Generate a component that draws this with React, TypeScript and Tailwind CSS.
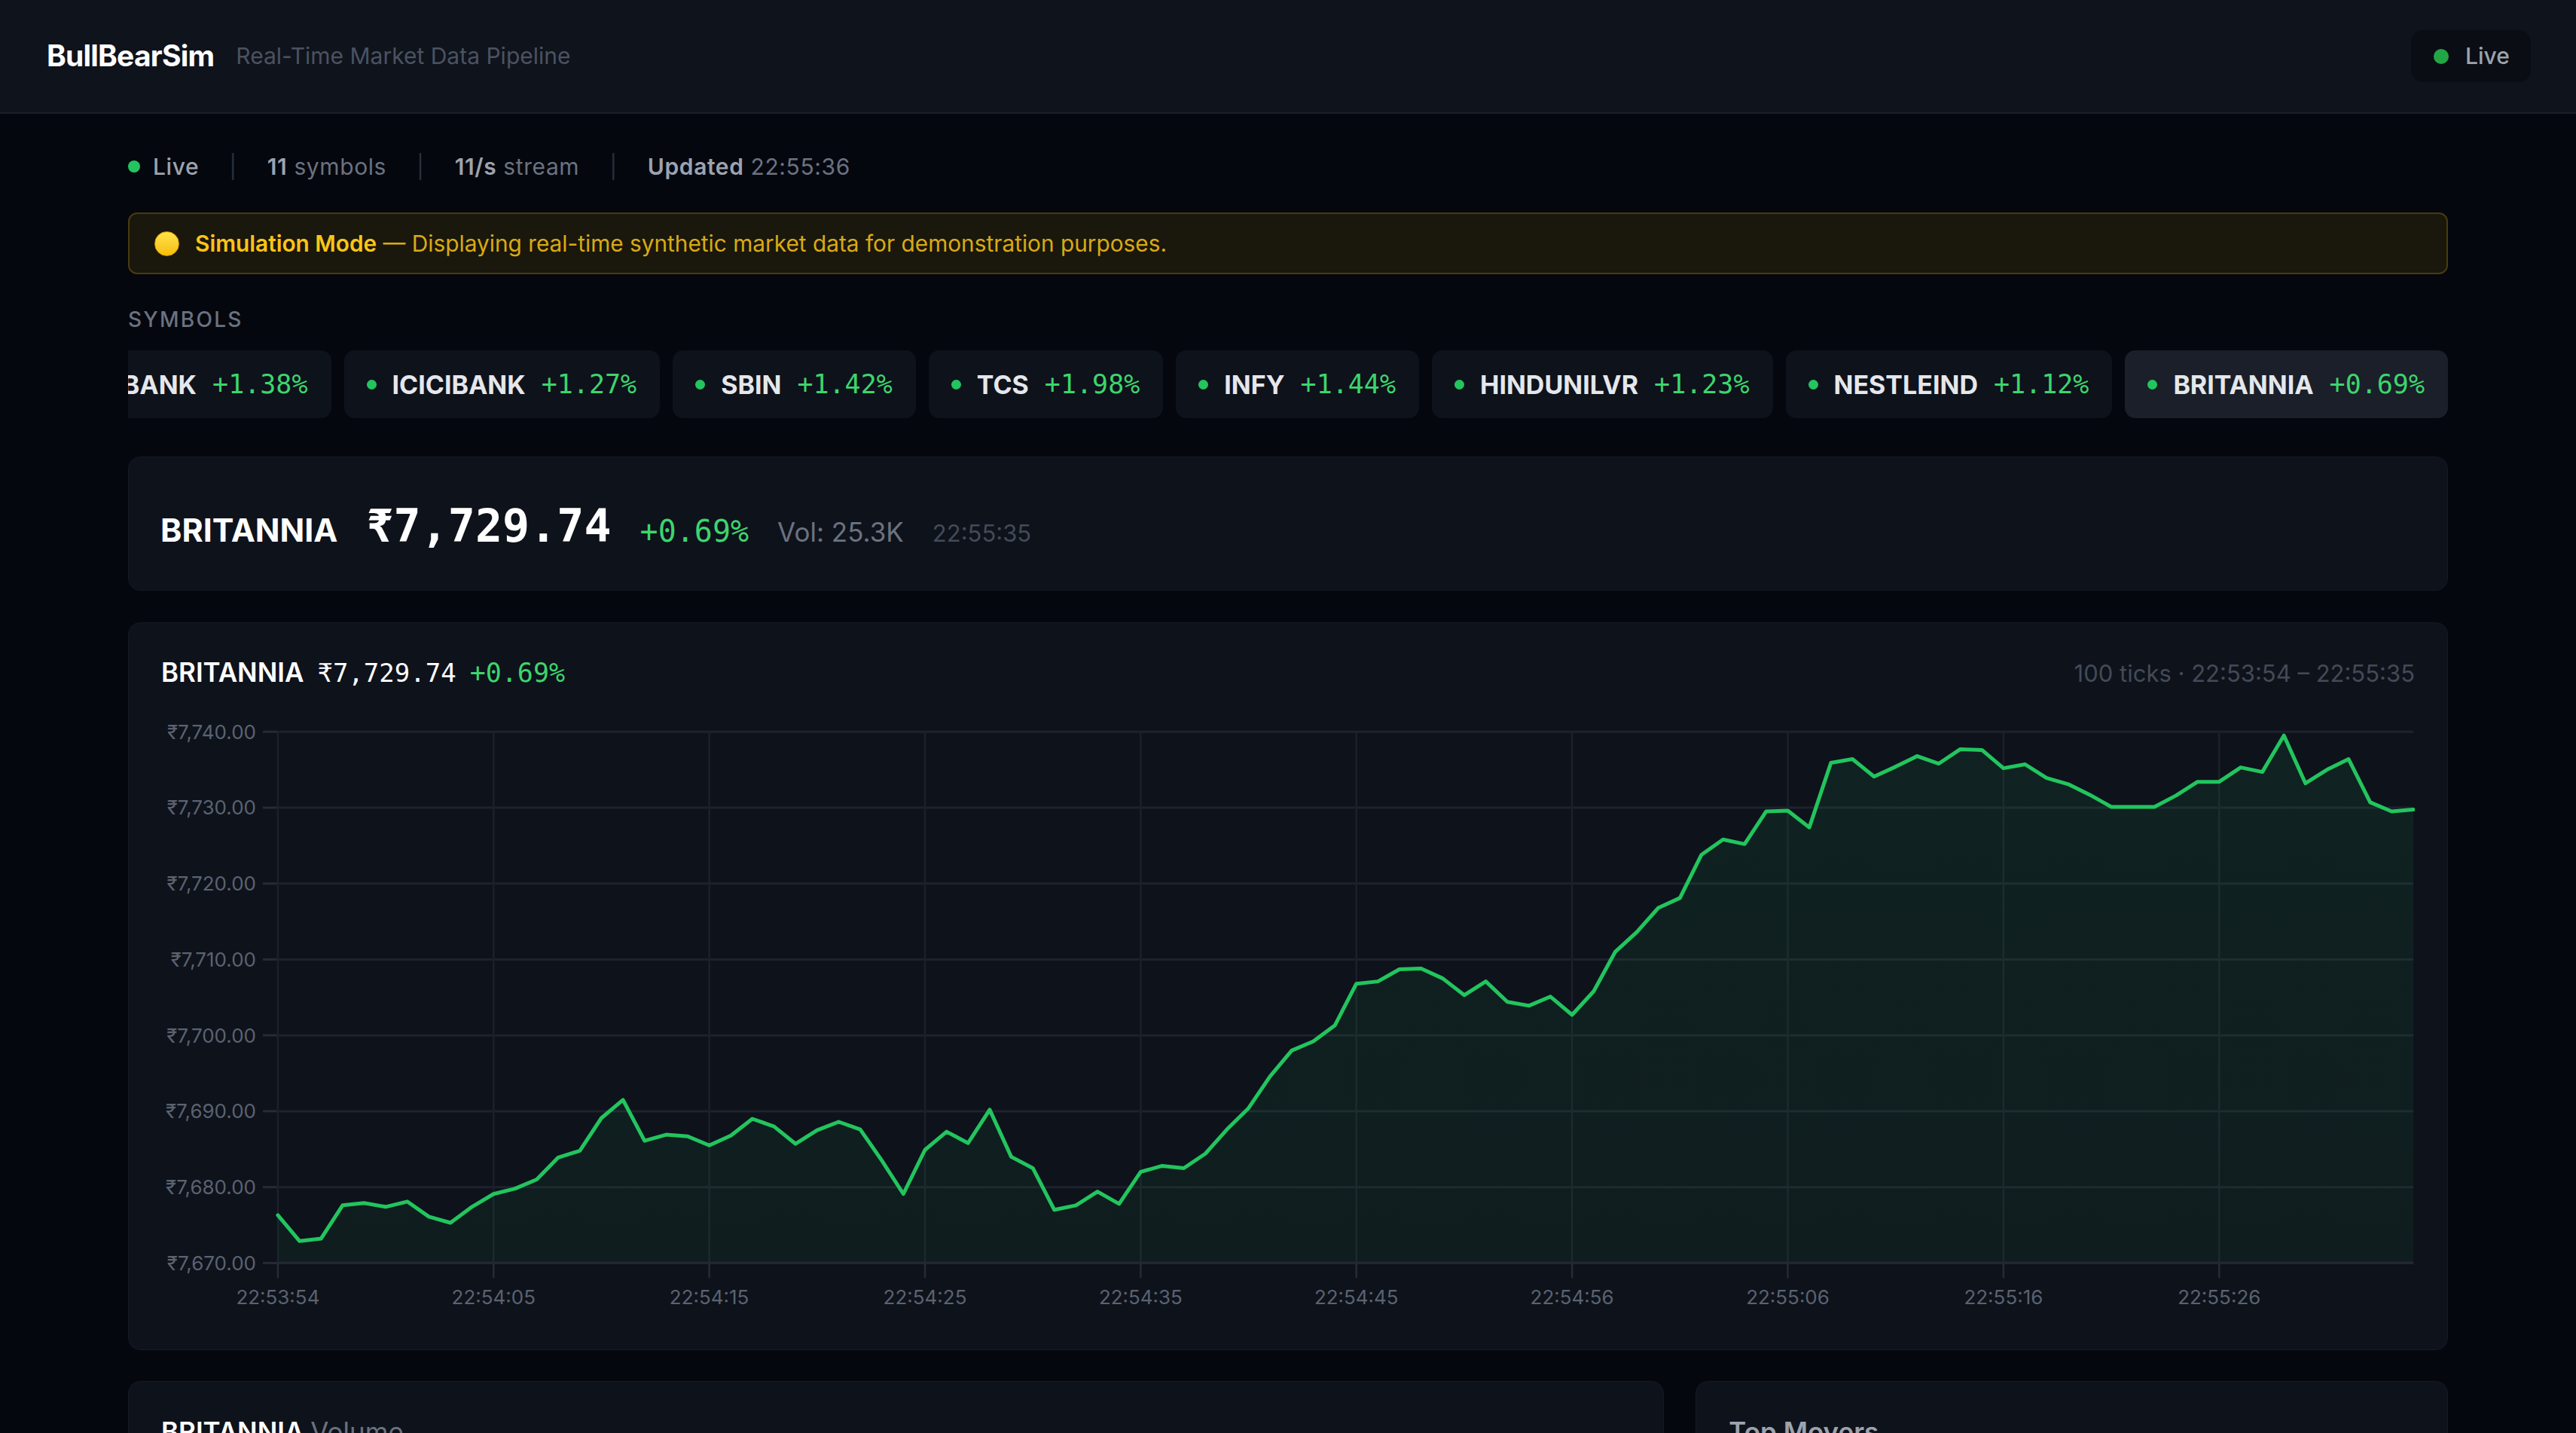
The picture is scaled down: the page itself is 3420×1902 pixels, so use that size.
import React from 'react';

interface Chip {
  sym: string;
  pct: string;
  active?: boolean;
}

const chips: Chip[] = [
  { sym: 'RELIANCE', pct: '+0.92%' },
  { sym: 'BHARTIARTL', pct: '+1.05%' },
  { sym: 'ITC', pct: '+0.47%' },
  { sym: 'HDFCBANK', pct: '+1.38%' },
  { sym: 'ICICIBANK', pct: '+1.27%' },
  { sym: 'SBIN', pct: '+1.42%' },
  { sym: 'TCS', pct: '+1.98%' },
  { sym: 'INFY', pct: '+1.44%' },
  { sym: 'HINDUNILVR', pct: '+1.23%' },
  { sym: 'NESTLEIND', pct: '+1.12%' },
  { sym: 'BRITANNIA', pct: '+0.69%', active: true },
];

// last 100 ticks of BRITANNIA
const prices = [
  7676.3, 7672.9, 7673.2, 7677.6, 7677.9, 7677.4, 7678.1, 7676.1, 7675.3, 7677.4,
  7679.1, 7679.8, 7681.0, 7683.9, 7684.8, 7689.1, 7691.5, 7686.1, 7686.9, 7686.7,
  7685.5, 7686.8, 7689.0, 7688.0, 7685.7, 7687.5, 7688.6, 7687.6, 7683.5, 7679.1,
  7684.9, 7687.3, 7685.8, 7690.2, 7684.0, 7682.5, 7677.0, 7677.6, 7679.4, 7677.8,
  7682.0, 7682.8, 7682.5, 7684.4, 7687.6, 7690.4, 7694.6, 7698.0, 7699.2, 7701.3,
  7706.8, 7707.1, 7708.7, 7708.8, 7707.5, 7705.3, 7707.1, 7704.4, 7703.9, 7705.1,
  7702.7, 7705.8, 7711.0, 7713.6, 7716.8, 7718.1, 7723.8, 7725.8, 7725.2, 7729.5,
  7729.6, 7727.4, 7735.9, 7736.4, 7734.1, 7735.4, 7736.8, 7735.8, 7737.7, 7737.6,
  7735.2, 7735.7, 7733.9, 7733.1, 7731.7, 7730.1, 7730.1, 7730.1, 7731.6, 7733.4,
  7733.4, 7735.3, 7734.7, 7739.5, 7733.2, 7735.0, 7736.4, 7730.7, 7729.5, 7729.74,
];

const timeLabels = [
  '22:53:54', '22:54:05', '22:54:15', '22:54:25', '22:54:35',
  '22:54:45', '22:54:56', '22:55:06', '22:55:16', '22:55:26',
];

const yTicks = [7740, 7730, 7720, 7710, 7700, 7690, 7680, 7670];

const PLOT_L = 155;
const PLOT_R = 2992;
const PLOT_T = 42;
const ROW = 100.8;
const STEP = (PLOT_R - PLOT_L) / 99;

const px = (i: number) => PLOT_L + i * STEP;
const py = (p: number) => PLOT_T + (7740 - p) * (ROW / 10);

const fmt = (v: number) => '₹' + v.toLocaleString('en-US', { minimumFractionDigits: 2, maximumFractionDigits: 2 });

const PriceChart = () => {
  const bottom = PLOT_T + ROW * 7;
  const line = prices.map((p, i) => `${i === 0 ? 'M' : 'L'}${px(i).toFixed(1)},${py(p).toFixed(1)}`).join(' ');
  const area = `${line} L${PLOT_R},${bottom} L${PLOT_L},${bottom} Z`;

  return (
    <svg width="100%" height="816" viewBox="0 0 2994 816" className="block">
      <defs>
        <linearGradient id="fillGreen" x1="0" y1="0" x2="0" y2="1">
          <stop offset="0%" stopColor="#22c55e" stopOpacity="0.09" />
          <stop offset="100%" stopColor="#22c55e" stopOpacity="0.06" />
        </linearGradient>
      </defs>

      {/* grid */}
      {yTicks.map((v, k) => (
        <g key={v}>
          <line x1={PLOT_L} x2={PLOT_R} y1={PLOT_T + k * ROW} y2={PLOT_T + k * ROW} stroke="#1d222d" strokeWidth="3" />
          <line x1={PLOT_L - 20} x2={PLOT_L} y1={PLOT_T + k * ROW} y2={PLOT_T + k * ROW} stroke="#262b36" strokeWidth="3" />
          <text x={PLOT_L - 29} y={PLOT_T + k * ROW + 9.5} textAnchor="end" fontSize="26" fill="#5b6270" fontFamily="Inter, 'Noto Sans', sans-serif">
            {fmt(v)}
          </text>
        </g>
      ))}
      {timeLabels.map((t, k) => {
        const x = px(k * 10);
        return (
          <g key={t}>
            <line x1={x} x2={x} y1={PLOT_T} y2={bottom} stroke="#1b202a" strokeWidth="2.5" />
            <line x1={x} x2={x} y1={bottom} y2={bottom + 20} stroke="#262b36" strokeWidth="2.5" />
            <text x={x} y={802} textAnchor="middle" fontSize="26" fill="#5b6270" fontFamily="Inter, 'Noto Sans', sans-serif">
              {t}
            </text>
          </g>
        );
      })}

      <path d={area} fill="url(#fillGreen)" />
      <path d={line} fill="none" stroke="#22c55e" strokeWidth="5" strokeLinejoin="round" strokeLinecap="round" />
      <line x1={PLOT_L} x2={PLOT_R} y1={bottom} y2={bottom} stroke="#232833" strokeWidth="3" />
    </svg>
  );
};

const SymbolChip = ({ sym, pct, active }: Chip) => (
  <div
    className={`shrink-0 h-[90px] rounded-[14px] flex items-center pl-[30px] pr-[31px] gap-[21px] ${
      active ? 'bg-[#1a1f29]' : 'bg-[#0e121b]'
    }`}
  >
    <span className="w-[13px] h-[13px] rounded-full bg-[#22c55e]" />
    <span className="text-[34px] font-bold text-[#e5e7eb]">{sym}</span>
    <span className="font-['DejaVu_Sans_Mono',monospace] text-[35px] text-[#3dd56d]">{pct}</span>
  </div>
);

const Sep = () => <span className="text-[#2a303c]">|</span>;

export default function App() {
  return (
    <div className="min-h-screen bg-[#05070e] font-['Inter','Noto_Sans',sans-serif]">
      <header className="h-[151px] bg-[#0f131c] border-b-2 border-[#1a1f2a] flex items-center justify-between pl-[62px] pr-[60px]">
        <div className="flex items-center gap-[29px]">
          <span className="text-[39px] font-bold tracking-[-0.02em] text-white">BullBearSim</span>
          <span className="text-[30px] text-[#4b5260]">Real-Time Market Data Pipeline</span>
        </div>
        <div className="h-[69px] w-[159px] rounded-[16px] bg-[#0a0d14] flex items-center pl-[30px] gap-[22px]">
          <span className="w-[20px] h-[20px] rounded-full bg-[#22a645]" />
          <span className="text-[30px] font-medium text-[#9ca3af]">Live</span>
        </div>
      </header>

      <main className="px-[170px] pt-[50px] pb-[60px]">
        {/* status line */}
        <div className="h-[40px] flex items-center gap-[40px] text-[30px] tracking-[0.02em] text-[#6b7280]">
          <div className="flex items-center gap-[17px]">
            <span className="w-[16px] h-[16px] rounded-full bg-[#22c55e]" />
            <span className="font-medium text-[#9ca3af]">Live</span>
          </div>
          <Sep />
          <span>
            <span className="font-semibold text-[#9ca3af]">11</span> symbols
          </span>
          <Sep />
          <span>
            <span className="font-semibold text-[#9ca3af]">11/s</span> stream
          </span>
          <Sep />
          <span>
            <span className="font-semibold text-[#9ca3af]">Updated</span> 22:55:36
          </span>
        </div>

        {/* simulation banner */}
        <div className="mt-[41px] h-[82px] rounded-[12px] border-2 border-[#4a3a0e] bg-[#1a170c] flex items-center pl-[33px] gap-[21px] text-[29.8px]">
          <span className="w-[33px] h-[33px] rounded-full bg-gradient-to-b from-[#ffe347] to-[#f7bd00] border border-[#d99a00]" />
          <span className="text-[#d9aa14]">
            <span className="font-semibold text-[#fac515]">Simulation Mode</span> — Displaying real-time synthetic market
            data for demonstration purposes.
          </span>
        </div>

        {/* symbols */}
        <div className="mt-[40px] text-[28px] font-medium tracking-[0.08em] text-[#6b7280] leading-[40px]">SYMBOLS</div>
        <div className="mt-[21px] flex justify-end gap-[17px] overflow-hidden">
          {chips.map((c) => (
            <SymbolChip key={c.sym} {...c} />
          ))}
        </div>

        {/* quote */}
        <div className="mt-[51px] h-[178px] rounded-[16px] bg-[#0e121b] border border-[#141924] flex items-center px-[42px]">
          <div className="flex items-baseline gap-[38px] pt-[6px]">
            <span className="text-[43px] font-bold text-white">BRITANNIA</span>
            <span className="font-['DejaVu_Sans_Mono',monospace] text-[60px] font-bold text-white">₹7,729.74</span>
            <span className="font-['DejaVu_Sans_Mono',monospace] text-[40px] text-[#3dd56d]">+0.69%</span>
            <span className="text-[35px] text-[#6b7280]">Vol: 25.3K</span>
            <span className="text-[31px] text-[#434a57]">22:55:35</span>
          </div>
        </div>

        {/* chart */}
        <div className="mt-[42px] rounded-[16px] bg-[#0e121b] border border-[#141924] px-[43px] pt-[39px] pb-[46px]">
          <div className="flex items-baseline justify-between">
            <div className="flex items-baseline gap-[18px]">
              <span className="text-[35px] font-semibold text-white">BRITANNIA</span>
              <span className="font-['DejaVu_Sans_Mono',monospace] text-[34px] text-white">₹7,729.74</span>
              <span className="font-['DejaVu_Sans_Mono',monospace] text-[35px] text-[#3dd56d]">+0.69%</span>
            </div>
            <span className="text-[31px] text-[#434a57]">100 ticks · 22:53:54 – 22:55:35</span>
          </div>
          <div className="mt-[9px]">
            <PriceChart />
          </div>
        </div>

        {/* lower panels */}
        <div className="mt-[41px] grid grid-cols-3 gap-[42px]">
          <div className="col-span-2 h-[620px] rounded-[16px] bg-[#0e121b] border border-[#141924] px-[43px] pt-[40px]">
            <div className="text-[35px] font-semibold text-white">
              BRITANNIA <span className="font-normal text-[#6b7280]">Volume</span>
            </div>
          </div>
          <div className="h-[620px] rounded-[16px] bg-[#0e121b] border border-[#141924] px-[43px] pt-[40px]">
            <div className="text-[35px] font-semibold text-[#9ca3af]">Top Movers</div>
          </div>
        </div>
      </main>
    </div>
  );
}
